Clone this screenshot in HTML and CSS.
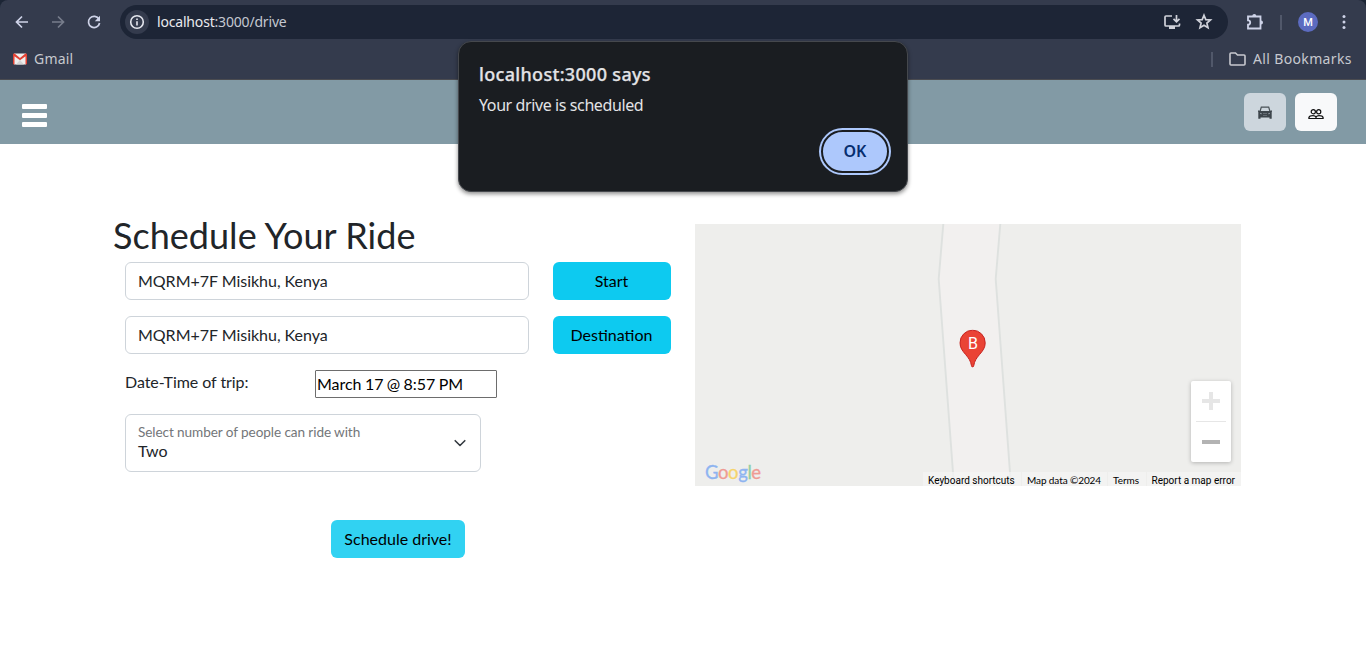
FILE: index.html
```html
<!DOCTYPE html>
<html lang="en">
<head>
<meta charset="utf-8">
<title>Schedule Your Ride</title>
<link rel="stylesheet" href="styles.css">
</head>
<body>
<div class="browser">
  <div class="toolbar">
    <svg class="nav-icon back" viewBox="0 0 16 16"><path d="M14 8H3M8 2.5L2.5 8 8 13.5"/></svg>
    <svg class="nav-icon forward" viewBox="0 0 16 16"><path d="M2 8h11M8 2.5L13.5 8 8 13.5"/></svg>
    <svg class="nav-icon reload" viewBox="0 0 16 16"><path d="M13 5.2A5.6 5.6 0 1 0 13.6 9"/><path class="solid" d="M14 1.8v5.4H8.8z"/></svg>
    <div class="address">
      <span class="info"><svg width="16" height="16" viewBox="0 0 16 16"><circle cx="8" cy="8" r="6.3"/><path d="M8 7.2v4.2M8 4.5v1.6"/></svg></span>
      <span class="url"><b>localhost</b>:3000/drive</span>
      <svg class="install" viewBox="0 0 20 18"><path d="M10 3H4Q3 3 3 4v8q0 1 1 1h12.500q1 0 1-1v-1.500"/><path class="base" d="M7 13h6v3H7z"/><path d="M14.500 2v6.500M11.500 5.800l3 3 3-3"/></svg>
      <svg class="star" viewBox="0 0 18 18"><path d="M9 2.200l1.800 4.400 4.700.4-3.600 3.100 1.100 4.600L9 12.200l-4 2.500 1.100-4.600L2.500 7l4.700-.4z"/></svg>
    </div>
    <svg class="puzzle" viewBox="0 0 18 18"><path d="M2 3.500h12.500v12H2v-3.800a2.200 2.200 0 0 0 0-4.400z"/><path class="solid" d="M6.300 3a2 2 0 0 1 4 0zM15 7.500a2 2 0 0 1 0 4z"/></svg>
    <span class="divider"></span>
    <span class="avatar">M</span>
    <svg class="more" viewBox="0 0 4 16"><circle cx="2" cy="2.500" r="1.500"/><circle cx="2" cy="8" r="1.500"/><circle cx="2" cy="13.500" r="1.500"/></svg>
  </div>
  <div class="bookmarks">
    <svg class="gmail" viewBox="0 0 14 12"><path fill="#eee" d="M1 .5h12v11H1z"/><path fill="#d4d4d4" d="M3 11.500L7 7l4 4.500z"/><path fill="#e34133" d="M0 1.500Q0 .5 1 .5h.6L7 5 12.400.5h.6q1 0 1 1v9q0 1-1 1h-.5V3.300L7 7.300 1.500 3.300v8.200H1q-1 0-1-1z"/></svg>
    <span class="gmail-text">Gmail</span>
    <span class="divider"></span>
    <svg class="folder" viewBox="0 0 17 14"><path d="M1 2q0-1 1-1h4.500l2 2H15q1 0 1 1v8q0 1-1 1H2q-1 0-1-1z"/></svg>
    <span class="all">All Bookmarks</span>
  </div>
</div>
<header class="site-header">
  <div class="hamburger"><i></i><i></i><i></i></div>
  <button class="mode drive"><svg width="14" height="13" viewBox="0 0 14 13"><path fill="none" stroke="#485056" stroke-width="1.200" d="M2 5.500L3.300 1.200h7.400L12 5.500"/><path fill="#3d454b" d="M0 4.500h1.500v.6h11v-.6H14V5.600l-.3.400v6.700h-2.200v-1.200h-9v1.200H.3V6L0 5.600z"/><path fill="#89929a" d="M2 6.800l2 .8v.7L2 8zM12 6.800l-2 .8v.7l2-.3zM5 7h4v.6H5zM5 9h4v.5H5z"/></svg></button>
  <button class="mode riders"><svg width="16" height="16" viewBox="0 0 16 16"><g fill="none" stroke="#111" stroke-width="1.200"><circle cx="5.300" cy="5.700" r="2.100"/><circle cx="10.700" cy="5.700" r="2.100"/><path d="M.9 12.500v-1Q1.500 9.600 5 9.600q2.200 0 3 1.500.8-1.500 3-1.500 3.500 0 4.100 1.900v1zM8 11v1.500"/></g></svg></button>
</header>
<main class="content">
  <form class="ride-form">
    <h1>Schedule Your Ride</h1>
    <div class="row"><div class="input">MQRM+7F Misikhu, Kenya</div><button type="button" class="btn">Start</button></div>
    <div class="row"><div class="input">MQRM+7F Misikhu, Kenya</div><button type="button" class="btn">Destination</button></div>
    <div class="date-row"><span class="date-label">Date-Time of trip:</span><div class="date">March 17 @ 8:57 PM</div></div>
    <div class="select"><div><small>Select number of people can ride with</small><span>Two</span></div><svg width="16" height="16" viewBox="0 0 16 16"><path d="M3.200 5.700L8 10.500l4.800-4.800"/></svg></div>
    <button type="button" class="btn submit">Schedule drive!</button>
  </form>
  <section class="map">
    <svg class="roads" width="546" height="262" viewBox="0 0 546 262"><path fill="#f2f0ef" d="M248.300 0L243.700 55 259 262H316L300.700 55 305.300 0z"/><path fill="none" stroke="#dee1df" stroke-width="1.900" d="M248.300 0L243.700 55 259 262M305.300 0L300.700 55 316 262"/></svg>
    <div class="pin"><svg width="27" height="38" viewBox="0 0 27 38"><path fill="#ea4335" stroke="#c5221f" d="M13.500.6A12.600 12.600 0 0 0 .9 13.200c0 5 2.400 7.900 5.700 11.800 3 3.500 5 6.400 5.700 10.800.2 2.200 2.200 2.200 2.400 0 .7-4.400 2.700-7.300 5.700-10.800 3.300-3.900 5.700-6.800 5.700-11.800A12.600 12.600 0 0 0 13.500.6z"/></svg><span>B</span></div>
    <div class="google"><span class="b">G</span><span class="r">o</span><span class="y">o</span><span class="b">g</span><span class="g">l</span><span class="r">e</span></div>
    <div class="zoom"><svg width="40" height="81" viewBox="0 0 40 81"><path fill="#e6e6e6" d="M11 18h7v-7h4v7h7v4h-7v7h-4v-7h-7zM5 40h30v1H5z"/><path fill="#b3b3b3" d="M11 59h18v4H11z"/></svg></div>
    <div class="legal"><span class="keys">Keyboard shortcuts</span><span class="data">Map data ©2024</span><span class="terms">Terms</span><span class="report">Report a map error</span></div>
  </section>
</main>
<div class="dialog">
  <h2>localhost:3000 says</h2>
  <p>Your drive is scheduled</p>
  <button>OK</button>
</div>
</body>
</html>
```
FILE: styles.css
```css
* { box-sizing: border-box; }
body { margin: 0; height: 656px; overflow: hidden; color: #212529; font: 16px/24px Lato, sans-serif; }
button { font: inherit; border: 0; padding: 0; }
svg { display: block; flex: none; }
.browser { height: 80px; background: #343b4d; border-bottom: 1px solid #4a4b50; font-family: "Noto Sans", sans-serif; color: #c7c9cf; border-radius: 8px 8px 0 0; }
html { background: #1c2535; }
.toolbar { height: 44px; display: flex; align-items: center; padding-left: 14px; }
.nav-icon { width: 16px; height: 16px; fill: none; stroke: #ced3e8; stroke-width: 1.7; margin-right: 20px; }
.forward { stroke: #777d8c; }
.reload { margin-right: 18px; }
.solid { fill: #ced3e8; stroke: none; }
.address { width: 1108px; height: 34px; border-radius: 17px; background: #1d2536; display: flex; align-items: center; padding: 0 15px 0 5px; }
.info { width: 24px; height: 24px; border-radius: 50%; background: #343b4d; display: flex; align-items: center; justify-content: center; margin-right: 8px; }
.info svg { fill: none; stroke: #e5e7ee; stroke-width: 1.6; }
.url { flex: 1; font-size: 14px; letter-spacing: -.18px; color: #c4c8d1; }
.url b { font-weight: 400; color: #e9eaee; }
.install { width: 20px; height: 18px; fill: none; stroke: #d0d2da; stroke-width: 1.700; margin-right: 13px; }
.base { fill: #d0d2da; stroke: none; }
.star { width: 18px; height: 18px; fill: none; stroke: #d0d2da; stroke-width: 1.700; }
.puzzle { width: 18px; height: 18px; fill: none; stroke: #ced3e8; stroke-width: 1.800; margin: 0 16px 0 18px; }
.divider { width: 2px; height: 15px; background: #51586a; }
.avatar { width: 20px; height: 20px; border-radius: 50%; background: #5c6bc0; color: #fff; font: 500 11px/21px Roboto, sans-serif; text-align: center; margin: 0 24px 0 16px; }
.more { width: 4px; height: 16px; fill: #ced3e8; }
.bookmarks { height: 30px; display: flex; align-items: center; padding: 0 15px 0 13px; font-size: 14px; }
.gmail { width: 14px; height: 12px; margin-right: 7px; }
.gmail-text { flex: 1; letter-spacing: .2px; }
.folder { width: 17px; height: 14px; fill: none; stroke: #c7c9cf; stroke-width: 1.600; margin: 0 7px 0 16px; }
.all { width: 98px; letter-spacing: .35px; white-space: nowrap; }
.site-header { height: 64px; display: flex; align-items: center; background: #829aa5; padding: 0 29px 0 22px; }
.hamburger { width: 25px; display: flex; flex-direction: column; gap: 4px; margin: 6px auto 0 0; }
.hamburger i { height: 5px; border-radius: 1px; background: #fff; }
.mode { width: 42px; height: 38px; border-radius: 6px; background: #f8f9fa; display: flex; align-items: center; justify-content: center; margin-left: 9px; }
.mode svg { margin-top: 3px; }
.drive { background: #cdd6dd; }
.drive svg { margin-top: 1px; }
.content { height: 512px; background: #fff; display: grid; grid-template-columns: 558px 546px; gap: 24px; padding: 71px 0 0 113px; align-items: start; }
h1 { font-size: 36px; line-height: 40px; font-weight: 400; margin: 0 0 7px; white-space: nowrap; letter-spacing: .03px; }
.row { display: flex; gap: 24px; padding-left: 12px; margin-bottom: 16px; }
.input { width: 404px; height: 38px; border: 1px solid #ced4da; border-radius: 6px; padding: 6px 12px; letter-spacing: -.02px; }
.btn { width: 118px; height: 38px; border-radius: 6px; background: #0dcaf0; color: #000; }
.row .btn { padding-right: 1px; }
.date-row { display: flex; padding-left: 12px; height: 28px; margin-bottom: 16px; }
.date-label { width: 190px; letter-spacing: -.06px; }
.date { width: 182px; height: 28px; border: 1px solid #6d6d6d; border-radius: 1px; padding: 1px 1px; color: #000; letter-spacing: -.02px; word-spacing: -.7px; }
.select { width: 356px; height: 58px; margin-left: 12px; border: 1px solid #ced4da; border-radius: 6px; padding: 7px 12px; display: flex; align-items: center; justify-content: space-between; }
.select div { display: flex; flex-direction: column; margin-top: -4px; }
.select small { font-size: 13.6px; line-height: 20px; color: #737679; letter-spacing: -.09px; }
.select span { line-height: 18px; }
.select svg { fill: none; stroke: #343a40; stroke-width: 1.600; stroke-linecap: round; stroke-linejoin: round; }
.submit { display: block; width: 134px; margin: 48px 0 0 218px; background: #31d2f2; }
.map { position: relative; height: 262px; margin-top: 9px; background: #eeeeec; overflow: hidden; }
.pin { position: absolute; left: 264.4px; top: 106.4px; width: 27px; height: 38px; }
.pin svg { transform: translate(.1px, -.4px); }
.pin span { position: absolute; inset: 2px 0 auto; text-align: center; color: #fff; font: 16px/24px Roboto, sans-serif; }
.google { position: absolute; left: 10px; top: 237px; font: 18.500px/22px Lato, sans-serif; letter-spacing: -.4px; -webkit-text-stroke: .4px; text-shadow: 0 0 1px #fff; }
.b { color: #8fb4ef; } .r { color: #ed9b94; } .y { color: #f4d36f; } .g { color: #91cfa3; }
.zoom { position: absolute; left: 496px; top: 157px; width: 40px; height: 81px; background: #fff; border-radius: 2px; box-shadow: 0 1px 4px rgba(0,0,0,.25); }
.legal { position: absolute; right: 0; bottom: 0; display: flex; height: 14px; width: 319px; font: 10px/17px Roboto, sans-serif; color: #000; white-space: nowrap; }
.legal span { background: rgba(245,245,245,.7); padding-left: 5px; border-left: 1px solid #eeeeec; }
.keys { width: 99px; }
.legal .data { width: 86px; font-family: Lato, sans-serif; letter-spacing: -.1px; }
.legal .terms { width: 39px; font-family: Lato, sans-serif; }
.legal .report { width: 95px; padding-left: 4.5px; }
.dialog { position: absolute; left: 458px; top: 41px; width: 450px; height: 151px; border: 1px solid #45484d; border-radius: 13px; background: #1a1d21; color: #e3e3e6; box-shadow: 0 2px 4px rgba(0,0,0,.45); padding: 20px 18px 0 20px; font-family: "Noto Sans", sans-serif; display: flex; flex-direction: column; }
.dialog h2 { font-size: 18px; line-height: 24px; font-weight: 500; margin: 0; letter-spacing: .32px; -webkit-text-stroke: .25px; }
.dialog p { font-size: 16px; line-height: 24px; margin: 7px 0 0; letter-spacing: -.4px; }
.dialog button { align-self: flex-end; width: 68px; height: 43px; margin-top: 13px; padding-bottom: 2px; border-radius: 21.5px; background: #adc8fc; color: #062e6f; border: 2px solid #1a1d21; box-shadow: 0 0 0 2px #adc8fc; font-size: 16px; font-weight: 600; }
```
